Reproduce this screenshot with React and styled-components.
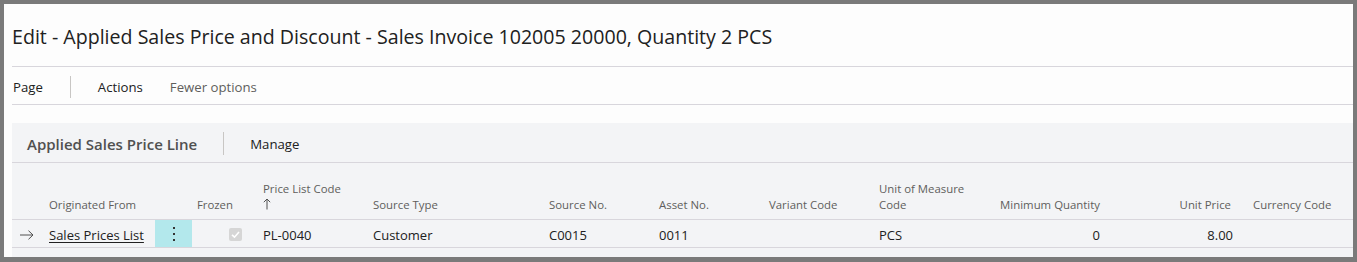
import styled, { createGlobalStyle } from 'styled-components';

const GlobalStyle = createGlobalStyle`
  html, body {
    margin: 0;
    padding: 0;
    background: #ffffff;
  }
  body {
    font-family: "Open Sans", "Noto Sans", sans-serif;
    color: #212121;
  }
`;

const columns = [
  { key: 'arrow', width: 29 },
  { key: 'origin', width: 106, label: 'Originated From' },
  { key: 'menu', width: 37 },
  { key: 'frozen', width: 71, label: 'Frozen', align: 'right', pr: 30 },
  { key: 'plc', width: 110, label: 'Price List Code', sort: true },
  { key: 'stype', width: 176, label: 'Source Type' },
  { key: 'sno', width: 110, label: 'Source No.' },
  { key: 'asset', width: 110, label: 'Asset No.' },
  { key: 'variant', width: 110, label: 'Variant Code' },
  { key: 'uom', width: 120, label: 'Unit of Measure Code' },
  { key: 'minqty', width: 111, label: 'Minimum Quantity', align: 'right', pr: 10 },
  { key: 'price', width: 133, label: 'Unit Price', align: 'right', pr: 12 },
  { key: 'currency', width: 120, label: 'Currency Code', pl: 10 },
];

const template = columns.map((c) => `${c.width}px`).join(' ');

const App = () => {
  return (
    <>
      <GlobalStyle />
      <Frame>
        <Title>Edit - Applied Sales Price and Discount - Sales Invoice 102005 20000, Quantity 2 PCS</Title>
        <Toolbar>
          <ToolItem>Page</ToolItem>
          <Divider />
          <ToolItem>Actions</ToolItem>
          <ToolItem $muted>Fewer options</ToolItem>
        </Toolbar>
        <Panel>
          <PanelHeader>
            <PanelTitle>Applied Sales Price Line</PanelTitle>
            <Divider $tall />
            <ToolItem>Manage</ToolItem>
          </PanelHeader>
          <Grid>
            <HeaderRow>
              {columns.map((c) => (
                <HeadCell key={c.key} $align={c.align} $pr={c.pr} $pl={c.pl}>
                  {c.key === 'uom' ? (
                    <>Unit of Measure<br />Code</>
                  ) : c.sort ? (
                    <>
                      {c.label}
                      <br />
                      <SortArrow viewBox="0 0 8 12" width="8" height="12">
                        <path d="M4 11.5 V1 M0.8 4.2 L4 1 L7.2 4.2" />
                      </SortArrow>
                    </>
                  ) : (
                    c.label
                  )}
                </HeadCell>
              ))}
            </HeaderRow>
            <DataRow>
              <Cell>
                <RowArrow viewBox="0 0 14 10" width="14" height="10">
                  <path d="M0 5 H13 M8.5 0.7 L13 5 L8.5 9.3" />
                </RowArrow>
              </Cell>
              <Cell><Link>Sales Prices List</Link></Cell>
              <MenuCell>
                <Dots viewBox="0 0 4 16" width="4" height="16">
                  <rect x="1" y="1" width="2" height="2" />
                  <rect x="1" y="7" width="2" height="2" />
                  <rect x="1" y="13" width="2" height="2" />
                </Dots>
              </MenuCell>
              <Cell $align="right" $pr={21}>
                <Check viewBox="0 0 13 13" width="13" height="13">
                  <rect x="0" y="0" width="13" height="13" rx="2" fill="#d6d6d6" />
                  <path d="M3 6.8 L5.5 9.2 L10 4" fill="none" stroke="#ffffff" strokeWidth="1.6" />
                </Check>
              </Cell>
              <Cell>PL-0040</Cell>
              <Cell>Customer</Cell>
              <Cell>C0015</Cell>
              <Cell>0011</Cell>
              <Cell />
              <Cell>PCS</Cell>
              <Cell $align="right" $pr={10}>0</Cell>
              <Cell $align="right" $pr={10}>8.00</Cell>
              <Cell $pl={10} />
            </DataRow>
          </Grid>
        </Panel>
      </Frame>
    </>
  );
};

export default App;

const Frame = styled.div`
  box-sizing: border-box;
  width: 1357px;
  height: 262px;
  border: 4px solid #7a7a7a;
  border-bottom-width: 5px;
  padding: 0 0 0 8px;
  background: #fdfdfd;
  overflow: hidden;
  display: flex;
  flex-direction: column;
`;

const Title = styled.h1`
  margin: 0;
  height: 63px;
  display: flex;
  align-items: center;
  padding-top: 3px;
  font-size: 19.6px;
  font-weight: 400;
  color: #212121;
  white-space: nowrap;
  border-bottom: 1px solid #d8d6dc;
  box-sizing: border-box;
`;

const Toolbar = styled.div`
  height: 38px;
  display: flex;
  align-items: center;
  gap: 27px;
  padding-left: 1px;
  padding-top: 2px;
  border-bottom: 1px solid #d8d6dc;
  box-sizing: border-box;
`;

const ToolItem = styled.span`
  font-size: 13.2px;
  color: ${(p) => (p.$muted ? '#605e5c' : '#212121')};
  white-space: nowrap;
`;

const Divider = styled.span`
  width: 1px;
  height: ${(p) => (p.$tall ? 23 : 22)}px;
  background: #c8c6c4;
`;

const Panel = styled.div`
  margin-top: 18px;
  flex: 1;
  background: #f3f4f6;
`;

const PanelHeader = styled.div`
  height: 40px;
  display: flex;
  align-items: center;
  gap: 26px;
  padding-left: 15px;
  padding-top: 2px;
  border-bottom: 1px solid #d8d6dc;
  box-sizing: border-box;
`;

const PanelTitle = styled.span`
  font-size: 15px;
  font-weight: 600;
  color: #505050;
  white-space: nowrap;
`;

const Grid = styled.div`
  display: flex;
  flex-direction: column;
`;

const HeaderRow = styled.div`
  display: grid;
  grid-template-columns: ${template};
  padding-left: 8px;
  height: 57px;
  align-items: end;
  border-bottom: 1px solid #d8d6dc;
  box-sizing: border-box;
`;

const DataRow = styled.div`
  display: grid;
  grid-template-columns: ${template};
  padding-left: 8px;
  height: 28px;
  align-items: stretch;
  border-bottom: 1px solid #d8d6dc;
  box-sizing: border-box;
`;

const HeadCell = styled.div`
  font-size: 11.4px;
  line-height: 16px;
  color: #605e5c;
  padding-bottom: 6px;
  text-align: ${(p) => p.$align || 'left'};
  padding-right: ${(p) => p.$pr || 0}px;
  padding-left: ${(p) => p.$pl || 0}px;
  white-space: nowrap;
`;

const SortArrow = styled.svg`
  fill: none;
  stroke: #505050;
  stroke-width: 1;
  vertical-align: -1px;
`;

const Cell = styled.div`
  display: flex;
  align-items: center;
  justify-content: ${(p) => (p.$align === 'right' ? 'flex-end' : 'flex-start')};
  padding-top: 2px;
  padding-right: ${(p) => p.$pr || 0}px;
  padding-left: ${(p) => p.$pl || 0}px;
  font-size: 13px;
  color: #212121;
  white-space: nowrap;
`;

const RowArrow = styled.svg`
  fill: none;
  stroke: #505050;
  stroke-width: 1;
`;

const Link = styled.span`
  text-decoration: underline;
  text-underline-offset: 2px;
`;

const MenuCell = styled.div`
  background: #b3e8ec;
  display: flex;
  align-items: center;
  justify-content: center;
`;

const Dots = styled.svg`
  fill: #333333;
`;

const Check = styled.svg`
  display: block;
`;
